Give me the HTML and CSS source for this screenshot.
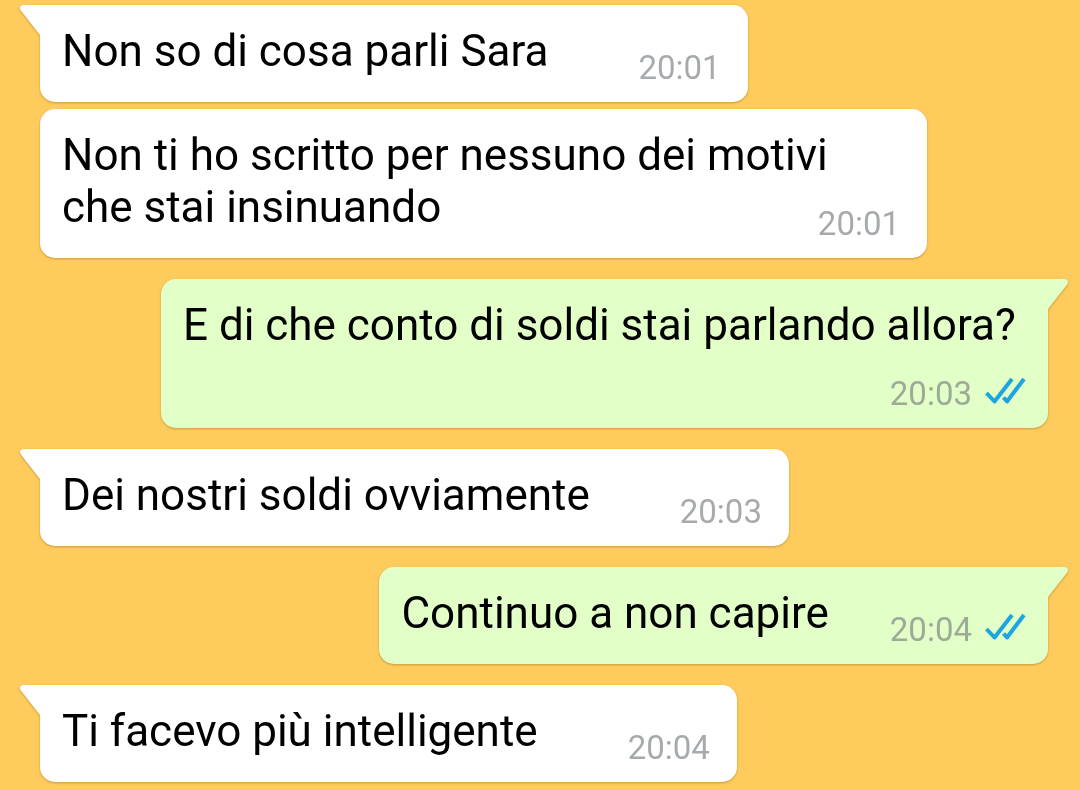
FILE: index.html
```html
<!DOCTYPE html>
<html lang="it">
<head>
    <meta charset="UTF-8">
    <meta name="viewport" content="width=device-width, initial-scale=1.0">
    <title>Chat</title>
    <link rel="stylesheet" href="styles.css">
</head>
<body>
    <!-- shared shapes -->
    <svg class="defs" aria-hidden="true">
        <symbol id="tail" viewBox="0 0 21 32">
            <path d="M21 0H4Q0 0 0 3Q0 5 2 7L20 30V32H21Z"/>
        </symbol>
        <symbol id="ticks" viewBox="0 0 42 36">
            <path d="M2.5 17L10.5 25.5L28 3M19.5 21.5L23 25.5L40 3"/>
        </symbol>
    </svg>

    <main class="chat">
        <div class="message in">
            <svg class="tail" aria-hidden="true"><use href="#tail"/></svg>
            <span class="text">Non so di cosa parli Sara</span>
            <span class="meta"><time>20:01</time></span>
        </div>

        <div class="message in same">
            <span class="text">Non ti ho scritto per nessuno dei motivi che stai insinuando</span>
            <span class="meta"><time>20:01</time></span>
        </div>

        <div class="message out">
            <svg class="tail" aria-hidden="true"><use href="#tail"/></svg>
            <span class="text">E di che conto di soldi stai parlando allora?</span>
            <span class="meta"><time>20:03</time><svg class="ticks" role="img" aria-label="Letto"><use href="#ticks"/></svg></span>
        </div>

        <div class="message in">
            <svg class="tail" aria-hidden="true"><use href="#tail"/></svg>
            <span class="text">Dei nostri soldi ovviamente</span>
            <span class="meta"><time>20:03</time></span>
        </div>

        <div class="message out">
            <svg class="tail" aria-hidden="true"><use href="#tail"/></svg>
            <span class="text">Continuo a non capire</span>
            <span class="meta"><time>20:04</time><svg class="ticks" role="img" aria-label="Letto"><use href="#ticks"/></svg></span>
        </div>

        <div class="message in">
            <svg class="tail" aria-hidden="true"><use href="#tail"/></svg>
            <span class="text">Ti facevo più intelligente</span>
            <span class="meta"><time>20:04</time></span>
        </div>
    </main>
</body>
</html>
```
FILE: styles.css
```css
* {
    box-sizing: border-box;
}

body {
    margin: 0;
    background-color: #ffcb5c;
    font-family: Roboto, "Liberation Sans", sans-serif;
    color: #000;
}

.defs {
    display: none;
}

.chat {
    display: flex;
    flex-direction: column;
    align-items: flex-start;
    gap: 21px;
    padding: 5px 32px 8px 40px;
}

.message {
    position: relative;
    max-width: 88%;
    padding: 20px 27px 14px 22px;
    border-radius: 15px;
    font-size: 44px;
    line-height: 52px;
    filter: drop-shadow(0 1px 1px rgba(90, 60, 0, 0.35));
}

/* second message in a row from the same person */
.message.same {
    margin-top: -14px;
}

.in {
    background-color: #fff;
    fill: #fff;
}

.in:not(.same) {
    border-top-left-radius: 0;
}

.out {
    align-self: flex-end;
    padding-right: 22px;
    border-top-right-radius: 0;
    background-color: #e1ffc7;
    fill: #e1ffc7;
}

.tail {
    position: absolute;
    top: 0;
    left: -20px;
    width: 21px;
    height: 32px;
}

.out .tail {
    left: auto;
    right: -20px;
    transform: scaleX(-1);
}

/* floats beside the last line, or drops below it when there is no room */
.meta {
    float: right;
    display: flex;
    align-items: center;
    gap: 12px;
    margin-left: 90px;
    padding-top: 23px;
    font-size: 33px;
    line-height: 40px;
    color: rgba(120, 124, 128, 0.65);
}

.out .meta {
    margin-left: 61px;
}

.ticks {
    width: 42px;
    height: 36px;
    fill: none;
    stroke: #1ca5df;
    stroke-width: 4px;
    stroke-linejoin: round;
}
```
